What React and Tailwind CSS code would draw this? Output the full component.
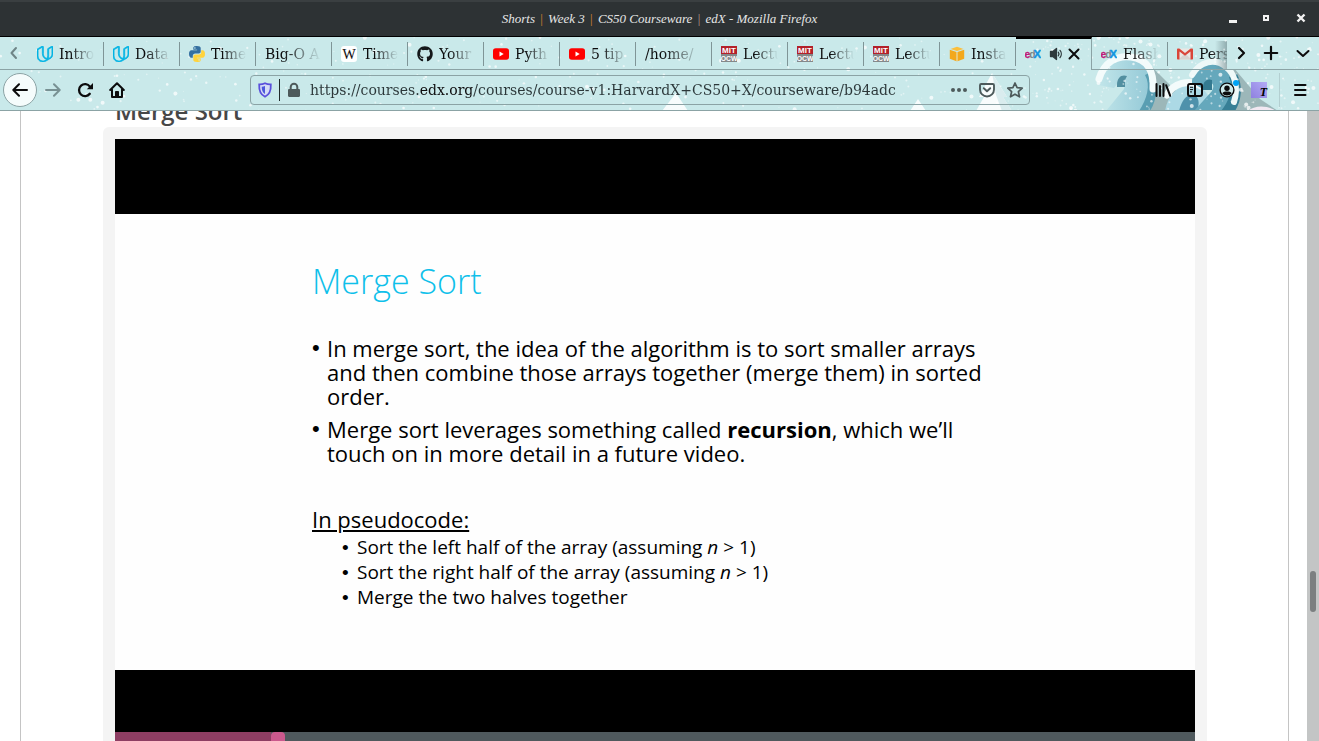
import React from "react";
import { FaGithub } from "react-icons/fa";
import { SiUdacity } from "react-icons/si";

const ICON = "block h-4 w-4 shrink-0";

function UdacityIcon() {
  return <SiUdacity className={ICON} color="#02b3e4" style={{ stroke: "#02b3e4", strokeWidth: 1.1 }} />;
}

function PythonIcon() {
  return (
    <svg viewBox="0 0 16 16" className={ICON}>
      <path fill="#3570a0" d="M7.900 0C4.800 0 4.300 1 4.300 2v1.700h3.800v.6H2.400C1 4.300 0 5.500 0 8c0 2.400 1 3.700 2.300 3.700h1.500V9.800c0-1.300 1-2.300 2.300-2.300h3.700c1.100 0 1.900-.9 1.900-2V2c0-1.200-1.200-2-3.800-2ZM5.900 1.200a.8.8 0 1 1 0 1.600.8.8 0 0 1 0-1.600Z" />
      <path fill="#ffd33c" d="M8.100 16c3.100 0 3.600-1 3.600-2v-1.700H7.900v-.6h5.700C15 11.700 16 10.500 16 8c0-2.400-1-3.700-2.300-3.700h-1.500v1.900c0 1.300-1 2.300-2.300 2.300H6.200c-1.100 0-1.900.9-1.900 2V14c0 1.200 1.200 2 3.800 2Zm2-1.200a.8.8 0 1 1 0-1.600.8.8 0 0 1 0 1.600Z" />
    </svg>
  );
}

function WikipediaIcon() {
  return (
    <svg viewBox="0 0 16 16" className={ICON}>
      <rect width="16" height="16" rx="3" fill="#fff" />
      <text x="8" y="12.500" textAnchor="middle" fontSize="14" fontFamily="Liberation Serif, serif" fill="#111" stroke="#111" strokeWidth=".1">W</text>
    </svg>
  );
}

function MitIcon() {
  return (
    <svg viewBox="0 0 16 16" className={ICON} fontFamily="Liberation Sans, sans-serif" fontWeight="bold" textAnchor="middle" fill="#fff">
      <rect width="16" height="8" fill="#b3202a" />
      <rect y="8" width="16" height="8" fill="#85888a" />
      <text x="8" y="6.900" fontSize="8">MIT</text>
      <text x="8" y="14.600" fontSize="6.800">OCW</text>
    </svg>
  );
}

function AwsIcon() {
  return (
    <svg viewBox="0 0 16 16" className={ICON}>
      <path fill="#fbbf3c" d="M8 .8 14.500 3 8 5 1.500 3Z" />
      <path fill="#f3a81c" d="M.8 3.800 7.500 5.900v9.300L.8 12.800ZM15.200 3.800 8.500 5.900v9.300l6.700-2.400Z" />
      <path fill="#f7c766" d="M7.500 5.900h1v9.300h-1Z" />
    </svg>
  );
}

function EdxIcon() {
  return (
    <svg viewBox="0 0 16 16" className={ICON} fontFamily="Liberation Sans, sans-serif" fontWeight="bold">
      <text x="-.4" y="11.800" fontSize="10.500" fill="#c0187a" stroke="#c0187a" strokeWidth=".3">e</text>
      <text x="4.200" y="11.800" fontSize="10.500" fill="#7d8587">d</text>
      <text x="8.600" y="12" fontSize="11.500" fill="#1295e0" stroke="#1295e0" strokeWidth=".4">X</text>
    </svg>
  );
}

function GmailIcon() {
  return (
    <svg viewBox="0 0 16 16" className={ICON}>
      <path fill="#e9e7e4" d="M1.500 2.500h13V13.500h-13Z" />
      <path fill="#d6d3d0" d="m1.500 13.500 6.500-6 6.500 6Z" />
      <path fill="#d9463a" d="M1 2.500h1.300L8 7l5.700-4.500H15c.6 0 1 .5 1 1v9c0 .6-.4 1-1 1h-1.500V5.600L8 9.800 2.500 5.600v7.900H1c-.6 0-1-.4-1-1v-9c0-.5.400-1 1-1Z" />
    </svg>
  );
}

function GithubIcon() {
  return <FaGithub className={ICON} color="#14181a" />;
}

function YoutubeIcon() {
  return (
    <svg viewBox="0 0 16 16" className={ICON}>
      <rect y="2.300" width="16" height="11.500" rx="2.800" fill="#f00" />
      <path d="M6.500 5.600v4.900L10.700 8Z" fill="#fff" />
    </svg>
  );
}

const TABS = [
  { title: "Intro", Icon: UdacityIcon },
  { title: "Data", Icon: UdacityIcon },
  { title: "Time", Icon: PythonIcon },
  { title: "Big-O A" },
  { title: "Time", Icon: WikipediaIcon },
  { title: "Your", Icon: GithubIcon },
  { title: "Pyth", Icon: YoutubeIcon },
  { title: "5 tip", Icon: YoutubeIcon },
  { title: "/home/" },
  { title: "Lectu", Icon: MitIcon },
  { title: "Lectu", Icon: MitIcon },
  { title: "Lectu", Icon: MitIcon },
  { title: "Insta", Icon: AwsIcon },
  { title: "edX", Icon: EdxIcon, active: true },
  { title: "Flash", Icon: EdxIcon },
  { title: "Pers", Icon: GmailIcon },
];

function Tab({ title, Icon, active }) {
  if (active) {
    return (
      <div role="tab" aria-selected="true" aria-label={title} className="flex w-[76px] shrink-0 items-center border-t-2 border-r border-t-black border-r-[#8ba3a5] pb-px pl-[9px]">
        <Icon />
        <button aria-label="Mute tab" className="ml-2">
          <svg viewBox="0 0 16 16" className={ICON} fill="none" stroke="#2f3a3c" strokeWidth="1.300" strokeLinecap="round">
            <path d="M1.500 5.500h2.300L7.500 2.500v11L3.800 10.500H1.500Z" fill="#2f3a3c" strokeLinejoin="round" />
            <path d="M9.300 6.200c.8 1 .8 2.600 0 3.600M11 4.400c1.700 2 1.700 5.200 0 7.200" />
          </svg>
        </button>
        <button aria-label="Close tab" className="ml-px">
          <svg viewBox="0 0 16 16" className={ICON} stroke="#0c0c0d" strokeWidth="2" strokeLinecap="round">
            <path d="m3.500 3.500 9 9M12.500 3.500l-9 9" />
          </svg>
        </button>
      </div>
    );
  }
  return (
    <div role="tab" aria-selected="false" className="flex w-[76px] shrink-0 items-center border-b border-[#8ba3a5] pt-0.5 pl-[9px]">
      {Icon && <Icon />}
      <span className={`min-w-0 flex-1 overflow-hidden whitespace-nowrap mask-r-from-30% mask-r-to-95% ${Icon ? "ml-1.5" : ""}`}>{title}</span>
      <span className="ml-[7px] h-6 w-px bg-[#7f9597]" />
    </div>
  );
}

const FLAKES = Array.from({ length: 560 }, (_, i) => {
  const a = Math.abs(Math.sin(i * 12.9898 + 3) * 43758.5453) % 1;
  const b = Math.abs(Math.sin(i * 78.233 + 1) * 24634.6345) % 1;
  const c = Math.abs(Math.sin(i * 39.425 + 7) * 13758.1453) % 1;
  const x = i < 360 ? a * 1319 : 1030 + a * 289;
  return { x, y: b * 74, r: c > 0.93 ? 2 : 0.6 + c * 0.8, o: 0.3 + c * 0.45 };
});

function ThemeArt() {
  return (
    <svg viewBox="0 0 1319 74" width="1319" height="74" aria-hidden="true" className="pointer-events-none absolute top-0 right-0 -z-10">
      <defs>
        <linearGradient id="ice" x1="0" y1="0" x2="1" y2="0">
          <stop offset="0" stopColor="#c2e6ea" />
          <stop offset="1" stopColor="#8fc6d5" />
        </linearGradient>
        <linearGradient id="fade" x1="0" y1="0" x2="1" y2="0">
          <stop offset="0" stopColor="#6b8488" stopOpacity="0" />
          <stop offset="1" stopColor="#6b8488" stopOpacity=".6" />
        </linearGradient>
      </defs>
      <path d="M662 74 676 56l12 18ZM910 74l8-12 8 12Z" fill="#fff" opacity=".85" />
      <path d="m992 36-13 24h5l-8 14h36l-9-14h4Z" fill="#f8fcfc" />
      <path d="m992 36 4 22 6 16h10l-9-14h4Z" fill="#d9ecee" />
      <path d="M1150 28l34 34v12h-36ZM1228 24l32 38 18 12h-46Z" fill="#91aaac" opacity=".8" />
      <path d="M1098 48c-2-16 12-30 30-28 20 2 29 18 27 33l-5 21h-44l18-22c2-6 1-10-4-9l-6 8Z" fill="url(#ice)" />
      <path d="M1145 38c6 10 2 24-6 36h11c8-12 8-30 3-40Z" fill="#599eb2" />
      <path d="M1099 42c5-17 18-24 32-22 17 2 23 15 22 32" fill="none" stroke="#f3fbfb" strokeWidth="7" strokeLinecap="round" />
      <path d="M1117 48c0-8 5-11 10-9l-2 4v7h-8Z" fill="#528fa0" />
      <path d="M1165 74c3-17 12-25 25-25 15 0 21 9 20 25Z" fill="#acd9e5" />
      <path d="M1179 74c3-12 8-17 14-16 6 1 7 8 4 16Z" fill="#4e91ab" />
      <path d="M1167 58c6-12 22-16 34-9" fill="none" stroke="#f3fbfb" strokeWidth="7" strokeLinecap="round" />
      <path d="M1192 46c0-14 12-22 24-20 18 2 25 18 20 31l-8 17h-34l18-20c3-6 1-9-5-8l-4 6Z" fill="#65a8bc" />
      <path d="M1229 40c5 12 0 24-8 34h14c7-11 8-26 2-37Z" fill="#377f96" />
      <path d="M1192 38c8-14 23-17 34-8 8 6 13 19 8 35" fill="none" stroke="#eef8f8" strokeWidth="6" strokeLinecap="round" />
      <path d="M1203 50c0-6 5-9 9-7v10h-9Z" fill="#347a90" />
      <path d="M1248 74c6-6 20-6 28 0Z" fill="#f1e8f2" />
      <rect x="1215" y="4" width="12" height="28" fill="url(#fade)" />
      <rect x="1227" y="0" width="92" height="32" fill="#c9e9ea" />
      {FLAKES.map((f, i) => (
        <circle key={i} cx={f.x} cy={f.y} r={f.r} fill="#fff" opacity={f.o} />
      ))}
    </svg>
  );
}

function TitleBar() {
  return (
    <div className="flex h-[37px] shrink-0 items-center border-t-2 border-b border-t-[#3a3f41] border-b-black bg-[#2d3234]">
      <div className="w-[92px]" />
      <h1 className="flex-1 text-center font-['Liberation_Serif',serif] text-[13px] text-[#e6e6e6] italic">
        Shorts <span className="mx-0.5 text-[#d8862f] not-italic">|</span> Week 3 <span className="mx-0.5 text-[#d8862f] not-italic">|</span> CS50 Courseware{" "}
        <span className="mx-0.5 text-[#b39c8b] not-italic">|</span> edX - Mozilla Firefox
      </h1>
      <div className="flex w-[92px] items-center gap-[18px]">
        <button aria-label="Minimize">
          <svg viewBox="0 0 16 16" className={ICON}><path d="M2 9h8v3H2Z" fill="#f2f2f2" /></svg>
        </button>
        <button aria-label="Restore">
          <svg viewBox="0 0 16 16" className={ICON}><path d="M2 4h6v6H2ZM4 6v2h2V6Z" fill="#f2f2f2" fillRule="evenodd" /></svg>
        </button>
        <button aria-label="Close">
          <svg viewBox="0 0 16 16" className={ICON}><path d="m2.500 3.500 7 7M9.500 3.500l-7 7" stroke="#f2f2f2" strokeWidth="2.400" /></svg>
        </button>
      </div>
    </div>
  );
}

function TabStrip() {
  return (
    <div className="flex h-[33px]">
      <button aria-label="Scroll tabs left" className="flex w-7 shrink-0 items-center justify-center border-b border-[#8ba3a5]">
        <svg viewBox="0 0 16 16" className={ICON} fill="none" stroke="#6f8587" strokeWidth="2" strokeLinecap="round" strokeLinejoin="round"><path d="M10 3 5.500 8l4.500 5" /></svg>
      </button>
      <div role="tablist" className="flex min-w-0 flex-1 overflow-hidden">
        {TABS.map((t, i) => <Tab key={i} {...t} />)}
      </div>
      <div className="flex w-[92px] shrink-0 items-center gap-3.5 border-b border-[#8ba3a5] pl-1.5">
        <button aria-label="Scroll tabs right">
          <svg viewBox="0 0 16 16" className={ICON} fill="none" stroke="#0c0c0d" strokeWidth="2.200" strokeLinecap="round" strokeLinejoin="round"><path d="m6 3 5 5-5 5" /></svg>
        </button>
        <button aria-label="New tab">
          <svg viewBox="0 0 16 16" className={ICON} stroke="#0c0c0d" strokeWidth="2.200" strokeLinecap="round"><path d="M8 1.800v12.400M1.800 8h12.400" /></svg>
        </button>
        <button aria-label="List all tabs" className="ml-0.5">
          <svg viewBox="0 0 16 16" className={ICON} fill="none" stroke="#0c0c0d" strokeWidth="2" strokeLinecap="round" strokeLinejoin="round"><path d="m2.500 6 5.500 5 5.500-5" /></svg>
        </button>
      </div>
    </div>
  );
}

function NavBar() {
  return (
    <div className="flex h-[41px] items-center border-b border-[#8ba3a5]">
      <div className="flex shrink-0 items-center gap-2 pl-[3px]">
        <button aria-label="Back" className="flex h-[34px] w-[34px] items-center justify-center rounded-full border border-[#8ba3a5] bg-[#f5fcfc]">
          <svg viewBox="0 0 16 16" className={ICON} fill="none" stroke="#0c0c0d" strokeWidth="2" strokeLinecap="round" strokeLinejoin="round"><path d="M15 8H1.500M7 2.200 1.300 8 7 13.800" /></svg>
        </button>
        <div className="flex items-center gap-4">
          <button aria-label="Forward">
            <svg viewBox="0 0 16 16" className={ICON} fill="none" stroke="#789193" strokeWidth="2" strokeLinecap="round" strokeLinejoin="round"><path d="M1 8h13.500M9 2.200 14.700 8 9 13.800" /></svg>
          </button>
          <button aria-label="Reload">
            <svg viewBox="0 0 16 16" className={ICON} fill="none" stroke="#0c0c0d" strokeWidth="2.300" strokeLinecap="round"><path d="M12.800 11.800A6 6 0 1 1 12.900 4.600" /><path d="M16 1v6.200H9.800Z" fill="#0c0c0d" stroke="none" /></svg>
          </button>
          <button aria-label="Home">
            <svg viewBox="0 0 16 16" className={ICON} fill="none" stroke="#0c0c0d" strokeWidth="2" strokeLinecap="round" strokeLinejoin="round"><path d="m1.200 8 6.800-6.700L14.800 8M3 7.500V15h10V7.500" /><path d="M6.500 14.500V9.500h3v5Z" fill="#0c0c0d" strokeWidth="1" /></svg>
          </button>
        </div>
      </div>
      <div className="w-[125px] shrink" />
      <div className="flex h-[30px] min-w-0 flex-1 items-center rounded-[4px] border border-[#8ba3a5] px-1.5">
        <svg viewBox="0 0 16 16" className={ICON}>
          <path d="M8 1.200c2 1 4 1.300 5.800 1.200.3 6-1 10.200-5.800 12.300C3.200 12.600 1.900 8.400 2.200 2.400 4 2.500 6 2.200 8 1.200Z" fill="#d6dcf6" stroke="#5a50dc" strokeWidth="1.800" />
          <path d="M8 4v8C5.500 10.500 4.700 8 4.700 4.800 6 4.800 7 4.500 8 4Z" fill="#4b58dc" />
        </svg>
        <span className="ml-1.5 h-[22px] w-px bg-[#202a2b]" />
        <svg viewBox="0 0 16 16" className={`${ICON} ml-1.5`}><path d="M3.200 7h9.600c.7 0 1.200.5 1.200 1.200v5.600c0 .7-.5 1.200-1.200 1.200H3.200C2.500 15 2 14.500 2 13.800V8.200C2 7.500 2.500 7 3.200 7Z" fill="#4d5a5b" /><path d="M4.700 7V5a3.300 3.300 0 0 1 6.600 0v2" fill="none" stroke="#4d5a5b" strokeWidth="2" /></svg>
        <input
          aria-label="Address"
          defaultValue="https://courses.edx.org/courses/course-v1:HarvardX+CS50+X/courseware/b94adc"
          className="ml-2 min-w-0 flex-1 bg-[linear-gradient(90deg,#2b3739_0_110px,#0c0c0d_110px_164px,#2b3739_164px)] bg-clip-text text-transparent outline-none"
        />
        <div className="flex shrink-0 items-center gap-3">
          <button aria-label="Page actions"><svg viewBox="0 0 16 16" className={ICON} fill="#4d5a5b"><circle cx="2" cy="8" r="2" /><circle cx="8" cy="8" r="2" /><circle cx="14" cy="8" r="2" /></svg></button>
          <button aria-label="Save to Pocket"><svg viewBox="0 0 16 16" className={ICON} fill="none" stroke="#4d5a5b" strokeWidth="1.900" strokeLinecap="round" strokeLinejoin="round"><path d="M2.200 2h11.600c.7 0 1.200.5 1.200 1.200V7.500a7 7 0 0 1-14 0V3.200C1 2.500 1.500 2 2.200 2Z" /><path d="m4.800 6.200 3.200 3 3.200-3" /></svg></button>
          <button aria-label="Bookmark this page"><svg viewBox="0 0 16 16" className={ICON} fill="none" stroke="#4d5a5b" strokeWidth="1.700" strokeLinejoin="round"><path d="m8 1 2.100 4.700 5.100.5-3.800 3.500 1.100 5.100L8 12.200l-4.500 2.600 1.100-5.100L.8 6.200l5.100-.5Z" /></svg></button>
        </div>
      </div>
      <div className="w-[125px] shrink" />
      <div className="flex shrink-0 items-center gap-4">
        <button aria-label="Library"><svg viewBox="0 0 16 16" className={ICON} stroke="#0c0c0d" strokeWidth="2" strokeLinecap="round"><path d="M1.500 2v12M5 4v10M8.500 2v12M11.200 3.300l4 10.500" /></svg></button>
        <button aria-label="Sidebars"><svg viewBox="0 0 16 16" className={ICON} fill="none" stroke="#0c0c0d" strokeWidth="2"><rect x="1" y="2" width="14" height="12" rx="2" /><path d="M8 2v12" /><path d="M3 5.300h3M3 7.600h3M3 9.900h2" strokeWidth="1" /></svg></button>
        <button aria-label="Account" className="relative">
          <svg viewBox="0 0 16 16" className={ICON}><circle cx="8" cy="8" r="6.900" fill="#cdeaeb" stroke="#0c0c0d" strokeWidth="1.400" /><circle cx="8" cy="6.300" r="2.700" fill="#0c0c0d" /><path d="M3.300 11.300C4.500 9.700 6 9.500 8 9.500s3.500.2 4.700 1.800C11.500 13 10 13.500 8 13.500s-3.500-.5-4.700-2.200Z" fill="#0c0c0d" /></svg>
          <span className="absolute -top-0.5 -right-1 h-1.5 w-1.5 rounded-full bg-[#00a3f5]" />
        </button>
        <button aria-label="Extension" className="flex h-4 w-4 items-end justify-end bg-linear-to-tr from-[#8f80e0] to-[#b3abf5] font-['Liberation_Serif',serif] text-xs leading-3 font-bold text-black italic">T</button>
        <span className="-ml-1 h-[34px] w-px bg-[#b3cfd1]" />
        <button aria-label="Menu" className="mr-[11px] -ml-1"><svg viewBox="0 0 16 16" className={ICON} stroke="#0c0c0d" strokeWidth="2" strokeLinecap="round"><path d="M3 3h10.500M3 8h10.500M3 13h10.500" /></svg></button>
      </div>
    </div>
  );
}

function Bullet({ children }) {
  return (
    <li className="flex whitespace-nowrap">
      <span className="w-[15px] shrink-0 font-['Liberation_Sans',sans-serif]">•</span>
      <span>{children}</span>
    </li>
  );
}

function Slide() {
  return (
    <article className="h-[456px] bg-[#fefefe] pt-[43px] pl-[197px] font-['Open_Sans',sans-serif] text-black">
      <h3 className="text-[34px] leading-[48px] font-light text-[#0fc0ea]">Merge Sort</h3>
      <ul className="mt-[31px] space-y-[9px] text-[22px] leading-6">
        <Bullet>
          In merge sort, the idea of the algorithm is to sort smaller arrays
          <br />
          and then combine those arrays together (merge them) in sorted
          <br />
          order.
        </Bullet>
        <Bullet>
          Merge sort leverages something called <strong>recursion</strong>, which we’ll
          <br />
          touch on in more detail in a future video.
        </Bullet>
      </ul>
      <p className="mt-10 text-[22px] leading-7 underline">In pseudocode:</p>
      <ul className="mt-0.5 pl-[30px] text-[19px] leading-[25px]">
        <Bullet>Sort the left half of the array (assuming <i>n</i> &gt; 1)</Bullet>
        <Bullet>Sort the right half of the array (assuming <i>n</i> &gt; 1)</Bullet>
        <Bullet>Merge the two halves together</Bullet>
      </ul>
    </article>
  );
}

function CoursePage() {
  return (
    <main className="flex min-h-0 flex-1 overflow-hidden bg-white">
      <div className="ml-5 min-w-0 flex-1 border-x border-[#c4c4c4] pr-[81px] pl-[82px]">
        <h2 className="-mt-4 pl-3 font-['Open_Sans',sans-serif] text-2xl leading-8 font-semibold text-[#474747]">Merge Sort</h2>
        <section className="rounded-t-md bg-[#f4f4f4] px-3 pt-3">
          <div className="bg-black pt-[75px]">
            <Slide />
            <div className="h-[62px]" />
            <div role="progressbar" aria-label="Video position" aria-valuenow={15} className="flex h-3 bg-[#4f595d]">
              <span className="w-[14.400%] bg-[#8e3e63]" />
              <span className="w-3.5 rounded-t-sm bg-[#cb598d]" />
            </div>
          </div>
        </section>
      </div>
      <div className="ml-[18px] w-3 shrink-0 bg-[#c3c5c5]">
        <div className="mt-[460px] ml-[3px] h-[41px] w-1.5 rounded-full bg-[#7b7f80]" />
      </div>
    </main>
  );
}

export default function App() {
  return (
    <div className="flex h-screen flex-col overflow-hidden">
      <TitleBar />
      <header className="relative isolate shrink-0 overflow-hidden bg-[#c9e9ea] font-['DejaVu_Serif',serif] text-sm text-[#0c0c0d]">
        <ThemeArt />
        <TabStrip />
        <NavBar />
      </header>
      <CoursePage />
    </div>
  );
}
